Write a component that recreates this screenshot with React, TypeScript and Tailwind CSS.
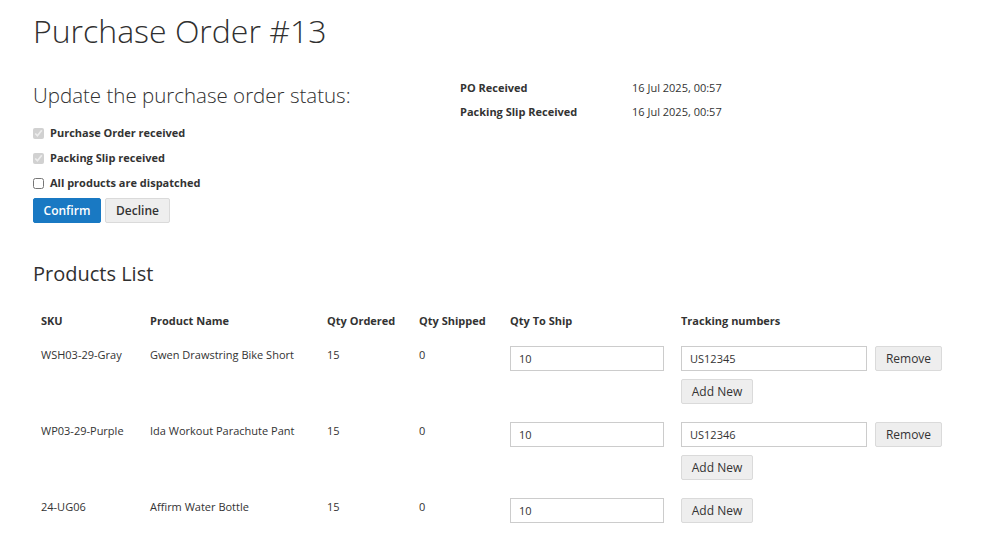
import React from 'react';

type Row = {
    sku: string;
    name: string;
    ordered: number;
    shipped: number;
    toShip: number;
    tracking: string[];
};

const rows: Row[] = [
    { sku: 'WSH03-29-Gray', name: 'Gwen Drawstring Bike Short', ordered: 15, shipped: 0, toShip: 10, tracking: ['US12345'] },
    { sku: 'WP03-29-Purple', name: 'Ida Workout Parachute Pant', ordered: 15, shipped: 0, toShip: 10, tracking: ['US12346'] },
    { sku: '24-UG06', name: 'Affirm Water Bottle', ordered: 15, shipped: 0, toShip: 10, tracking: [] },
];

const greyBtn =
    'h-[25px] whitespace-nowrap bg-[#eeeeee] border border-[#dadada] rounded-[2px] text-[12px] text-[#333]';
const inputCls =
    'h-[25px] border border-[#cccccc] px-2 text-[11px] text-[#333] outline-none bg-white';

const App: React.FC = () => {
    return (
        <div className="min-h-screen bg-white text-[#333] font-['Open_Sans',sans-serif] px-[33px] pt-[9px]">
            <h1 className="text-[32px] font-light leading-[44px] text-[#303030]">Purchase Order #13</h1>

            <div className="flex mt-[23px]">
                <div className="w-[427px]">
                    <h2 className="mt-[4px] text-[20.5px] font-light leading-[30px] text-[#303030]">
                        Update the purchase order status:
                    </h2>
                    <div className="mt-[14px] flex flex-col gap-[7px] text-[11px] font-bold">
                        <label className="flex items-center h-[18px] gap-[6px]">
                            <input type="checkbox" checked disabled readOnly className="m-0 w-[11px] h-[11px]" />
                            Purchase Order received
                        </label>
                        <label className="flex items-center h-[18px] gap-[6px]">
                            <input type="checkbox" checked disabled readOnly className="m-0 w-[11px] h-[11px]" />
                            Packing Slip received
                        </label>
                        <label className="flex items-center h-[18px] gap-[6px]">
                            <input type="checkbox" className="m-0 w-[11px] h-[11px]" />
                            All products are dispatched
                        </label>
                    </div>
                    <div className="flex gap-[4px] mt-[6px]">
                        <button className="h-[25px] w-[68px] bg-[#1979c3] border border-[#1979c3] rounded-[2px] text-white text-[12px] font-semibold">
                            Confirm
                        </button>
                        <button className={greyBtn + ' w-[65px] font-semibold'}>Decline</button>
                    </div>
                </div>

                <div className="text-[11px]">
                    <div className="flex h-[24px] items-center">
                        <span className="w-[172px] font-bold">PO Received</span>
                        <span>16 Jul 2025, 00:57</span>
                    </div>
                    <div className="flex h-[24px] items-center">
                        <span className="w-[172px] font-bold">Packing Slip Received</span>
                        <span>16 Jul 2025, 00:57</span>
                    </div>
                </div>
            </div>

            <h2 className="mt-[37px] text-[20px] leading-[28px] text-[#303030]">Products List</h2>

            <table className="mt-[16px] text-[11px] leading-[15px] border-collapse">
                <thead>
                    <tr className="text-left">
                        <th className="w-[109px] px-2 py-[9px] font-bold">SKU</th>
                        <th className="w-[177px] px-2 py-[9px] font-bold">Product Name</th>
                        <th className="w-[92px] px-2 py-[9px] font-bold">Qty Ordered</th>
                        <th className="w-[91px] px-2 py-[9px] font-bold">Qty Shipped</th>
                        <th className="w-[171px] px-2 py-[9px] font-bold">Qty To Ship</th>
                        <th className="px-2 py-[9px] font-bold">Tracking numbers</th>
                    </tr>
                </thead>
                <tbody>
                    {rows.map(r => (
                        <tr key={r.sku} className="align-top">
                            <td className="px-2 pt-[10px] pb-[9px]">{r.sku}</td>
                            <td className="px-2 pt-[10px] pb-[9px]">{r.name}</td>
                            <td className="px-2 pt-[10px] pb-[9px]">{r.ordered}</td>
                            <td className="px-2 pt-[10px] pb-[9px]">{r.shipped}</td>
                            <td className="px-2 py-[9px]">
                                <input className={inputCls + ' w-[154px]'} defaultValue={r.toShip} />
                            </td>
                            <td className="px-2 py-[9px]">
                                <div className="flex flex-col gap-[8px]">
                                    {r.tracking.map(t => (
                                        <div key={t} className="flex gap-[8px]">
                                            <input className={inputCls + ' w-[186px]'} defaultValue={t} />
                                            <button className={greyBtn + ' w-[67px]'}>Remove</button>
                                        </div>
                                    ))}
                                    <div>
                                        <button className={greyBtn + ' w-[72px]'}>Add New</button>
                                    </div>
                                </div>
                            </td>
                        </tr>
                    ))}
                </tbody>
            </table>
        </div>
    );
};

export default App;
